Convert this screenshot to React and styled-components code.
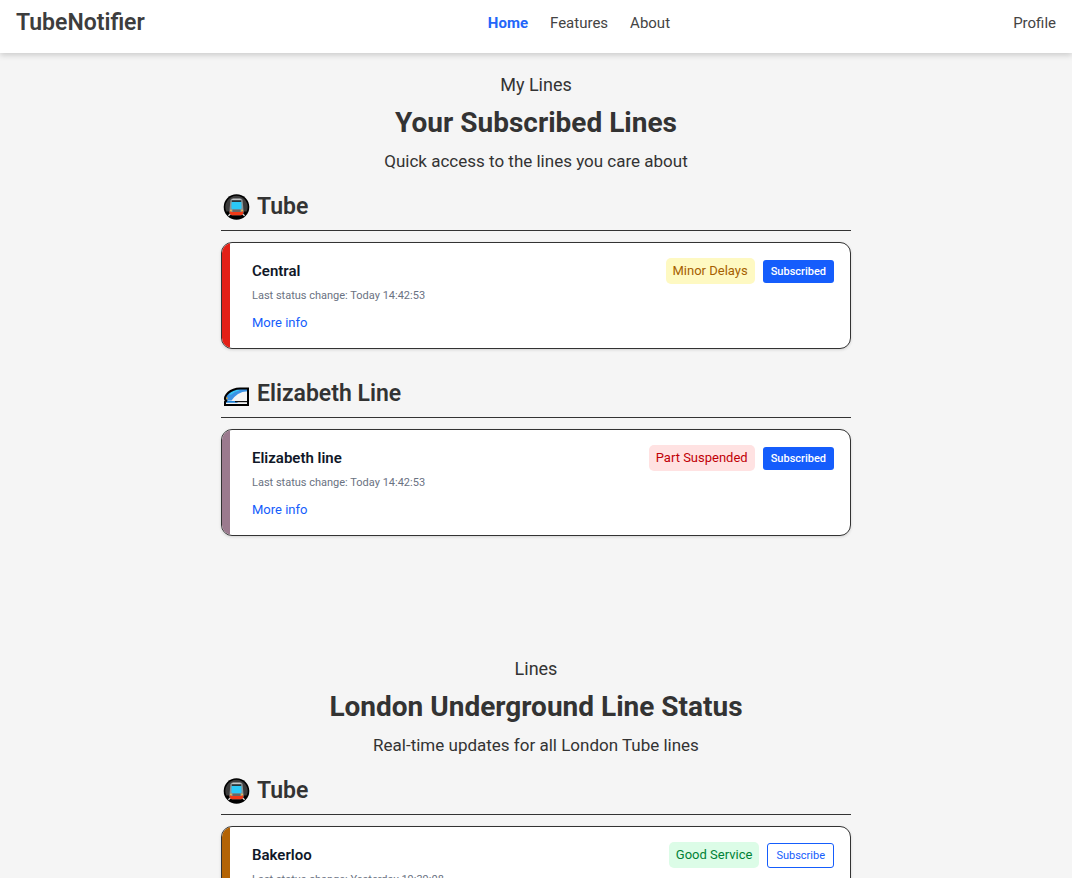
import React from "react";
import styled, { createGlobalStyle } from "styled-components";

const GlobalStyle = createGlobalStyle`
  *, *::before, *::after { box-sizing: border-box; }
  body {
    margin: 0;
    background: #f5f5f5;
    color: #333;
    font-family: Roboto, "Liberation Sans", sans-serif;
  }
  h1, h2, h3, h4, p, ul { margin: 0; padding: 0; }
  a { text-decoration: none; }
`;

const Header = styled.header`
  display: flex;
  justify-content: space-between;
  align-items: center;
  padding: 8px 16px 15px;
  background: #fff;
  box-shadow: 0 2px 6px rgba(0, 0, 0, 0.18);
`;

const Brand = styled.a`
  font-size: 23px;
  line-height: 30px;
  font-weight: 600;
  color: #3d3d3d;
`;

const Nav = styled.nav`
  display: flex;
  align-items: center;
  gap: 22px;
`;

const NavLink = styled.a`
  font-size: 15px;
  line-height: 30px;
  font-weight: ${({ $active }) => ($active ? 700 : 400)};
  color: ${({ $active }) => ($active ? "#2366f9" : "#444")};
`;

const Main = styled.main`
  display: flex;
  flex-direction: column;
  gap: 119px;
  max-width: 662px;
  margin: 0 auto;
  padding: 18px 16px 32px;
`;

const Section = styled.section`
  display: flex;
  flex-direction: column;
`;

const Intro = styled.header`
  display: flex;
  flex-direction: column;
  text-align: center;
  padding-bottom: 18px;
`;

const Eyebrow = styled.p`
  font-size: 18px;
  line-height: 28px;
`;

const Heading = styled.h2`
  padding: 6px 0 8px;
  font-size: 28px;
  line-height: 36px;
  font-weight: 700;
`;

const Lead = styled.p`
  font-size: 17px;
  line-height: 24px;
`;

const Groups = styled.div`
  display: flex;
  flex-direction: column;
  gap: 29px;
`;

const Group = styled.div`
  display: flex;
  flex-direction: column;
  gap: 11px;
`;

const GroupTitle = styled.h3`
  display: flex;
  align-items: center;
  gap: 5px;
  padding: 0 0 7px 1px;
  border-bottom: 1px solid #333;
  font-size: 23px;
  line-height: 32px;
  font-weight: 600;

  svg { flex: none; }
`;

const Card = styled.article`
  display: flex;
  overflow: hidden;
  background: #fff;
  border: 1px solid #333;
  border-radius: 11px;
  box-shadow: 0 1px 3px rgba(0, 0, 0, 0.14);
`;

const Stripe = styled.span`
  flex: 0 0 8px;
  background: ${({ $color }) => $color};
`;

const CardBody = styled.div`
  flex: 1;
  display: flex;
  justify-content: space-between;
  align-items: flex-start;
  padding: 15px 16px 15px 22px;
`;

const Details = styled.div`
  display: flex;
  flex-direction: column;
  align-items: flex-start;
`;

const LineName = styled.h4`
  font-size: 15px;
  line-height: 26px;
  font-weight: 600;
  color: #101828;
`;

const Updated = styled.p`
  padding: 4px 0 8px;
  font-size: 11px;
  line-height: 16px;
  color: #6a7282;
`;

const MoreInfo = styled.a`
  font-size: 13px;
  line-height: 21px;
  color: #155dfc;
`;

const Actions = styled.div`
  display: flex;
  align-items: center;
  gap: 8px;
`;

const tones = {
  good: ["#dcfce7", "#008236"],
  minor: ["#fef9c2", "#a65f00"],
  severe: ["#ffe2e2", "#c10007"],
};

const Badge = styled.span`
  padding: 3px 7px;
  border-radius: 5px;
  font-size: 13px;
  line-height: 20px;
  background: ${({ $tone }) => tones[$tone][0]};
  color: ${({ $tone }) => tones[$tone][1]};
`;

const SubscribeButton = styled.button`
  padding: 3px 8px;
  border: ${({ $on }) => ($on ? "0" : "1px solid #155dfc")};
  border-radius: 3px;
  font: ${({ $on }) => ($on ? 500 : 400)} 11px/17px Roboto, "Liberation Sans", sans-serif;
  background: ${({ $on }) => ($on ? "#155dfc" : "#fff")};
  color: ${({ $on }) => ($on ? "#fff" : "#155dfc")};
  cursor: pointer;
`;

function TubeIcon() {
  return (
    <svg width="30" height="30" viewBox="0 0 30 30" aria-hidden="true">
      <circle cx="14.5" cy="15" r="12.8" fill="#000" />
      <path d="M14.5 3.800a11.200 11.200 0 0 1 10.200 15.800h-20.400A11.200 11.200 0 0 1 14.500 3.800z" fill="#3b3b3b" />
      <path d="M9 21.500l-2.600 2.300M20 21.500l2.600 2.300" stroke="#e0e0e0" strokeWidth="1.300" />
      <path d="M10.500 6.500h8q1.900 0 2.100 2l1 11q0 3.800-2.800 3.800h-8.600q-2.800 0-2.800-3.800l1-11q.2-2 2.100-2z" fill="#8f9496" />
      <path d="M10 7.800q.2-1 1.200-1h6.600q1 0 1.200 1z" fill="#d5d8d9" />
      <path d="M9.800 8.300h9.400v1.700h-9.400z" fill="#26343a" />
      <path d="M9.600 10h9.800l.2 5.800q0 1.700-1.700 1.700h-6.800q-1.700 0-1.700-1.700z" fill="#2bc9f7" />
      <path d="M10.500 17.500h8v2.500h-8z" fill="#686868" />
      <path d="M7.700 19l2.300 1.100h9l2.300-1.100q.2 4.300-2.500 4.300h-8.600q-2.700 0-2.500-4.300z" fill="#f03a17" />
      <path d="M8.200 17.800h1.500v1.500h-1.500zM19.300 17.800h1.500v1.500h-1.500z" fill="#f5c542" />
    </svg>
  );
}

function BulletIcon() {
  return (
    <svg width="30" height="30" viewBox="0 0 30 30" aria-hidden="true">
      <path d="M26 9.500v16.500h-23v-3l1.200-1.200q-1.800-1.300-1-3.800 2.300-5.200 8.300-7.300 3-1.100 6.500-1.200z" fill="#f4f4f4" />
      <path d="M25.500 10v2.300q-5.500.2-9.500 2.700-4 2.700-6.500 6.500h-5q-1.300-1-.7-3 2.200-4.900 7.700-7.200 3-1.200 6.500-1.300z" fill="#3a92e4" />
      <path d="M6.500 15.500q3.500-4 9.500-4.900l1.500 1q-5 .9-8.500 4.200z" fill="#36c6f4" />
      <path d="M4 18.300l2 .5-.7 1.700-1.600-.4z" fill="#d7a23a" />
      <path d="M4 22h10l2 1.800h-12z" fill="#1c7fd6" />
      <path d="M13 22.600h13" stroke="#111" strokeWidth="1.200" />
      <path d="M26 9.500v16.500h-23v-3l1.200-1.200q-1.800-1.300-1-3.800 2.300-5.200 8.300-7.300 3-1.100 6.500-1.200z" fill="none" stroke="#000" strokeWidth="2" />
    </svg>
  );
}

const icons = { tube: TubeIcon, elizabeth: BulletIcon };

const sections = [
  {
    id: "my-lines",
    eyebrow: "My Lines",
    title: "Your Subscribed Lines",
    lead: "Quick access to the lines you care about",
    groups: [
      {
        icon: "tube",
        title: "Tube",
        lines: [
          { name: "Central", color: "#e32017", changed: "Today 14:42:53", status: "Minor Delays", tone: "minor", subscribed: true },
        ],
      },
      {
        icon: "elizabeth",
        title: "Elizabeth Line",
        lines: [
          { name: "Elizabeth line", color: "#9b7a8e", changed: "Today 14:42:53", status: "Part Suspended", tone: "severe", subscribed: true },
        ],
      },
    ],
  },
  {
    id: "lines",
    eyebrow: "Lines",
    title: "London Underground Line Status",
    lead: "Real-time updates for all London Tube lines",
    groups: [
      {
        icon: "tube",
        title: "Tube",
        lines: [
          { name: "Bakerloo", color: "#b36305", changed: "Yesterday 19:39:08", status: "Good Service", tone: "good", subscribed: false },
        ],
      },
    ],
  },
];

function LineCard({ line }) {
  return (
    <Card>
      <Stripe $color={line.color} />
      <CardBody>
        <Details>
          <LineName>{line.name}</LineName>
          <Updated>Last status change: {line.changed}</Updated>
          <MoreInfo href="#info">More info</MoreInfo>
        </Details>
        <Actions>
          <Badge $tone={line.tone}>{line.status}</Badge>
          <SubscribeButton type="button" $on={line.subscribed}>
            {line.subscribed ? "Subscribed" : "Subscribe"}
          </SubscribeButton>
        </Actions>
      </CardBody>
    </Card>
  );
}

export default function App() {
  return (
    <>
      <GlobalStyle />
      <Header>
        <Brand href="#home">TubeNotifier</Brand>
        <Nav aria-label="Main">
          <NavLink href="#home" $active>Home</NavLink>
          <NavLink href="#features">Features</NavLink>
          <NavLink href="#about">About</NavLink>
        </Nav>
        <Nav aria-label="Account">
          <NavLink href="#profile">Profile</NavLink>
        </Nav>
      </Header>
      <Main>
        {sections.map((section) => (
          <Section key={section.id} id={section.id}>
            <Intro>
              <Eyebrow>{section.eyebrow}</Eyebrow>
              <Heading>{section.title}</Heading>
              <Lead>{section.lead}</Lead>
            </Intro>
            <Groups>
              {section.groups.map((group) => {
                const Icon = icons[group.icon];
                return (
                  <Group key={group.title}>
                    <GroupTitle>
                      <Icon />
                      {group.title}
                    </GroupTitle>
                    {group.lines.map((line) => (
                      <LineCard key={line.name} line={line} />
                    ))}
                  </Group>
                );
              })}
            </Groups>
          </Section>
        ))}
      </Main>
    </>
  );
}
